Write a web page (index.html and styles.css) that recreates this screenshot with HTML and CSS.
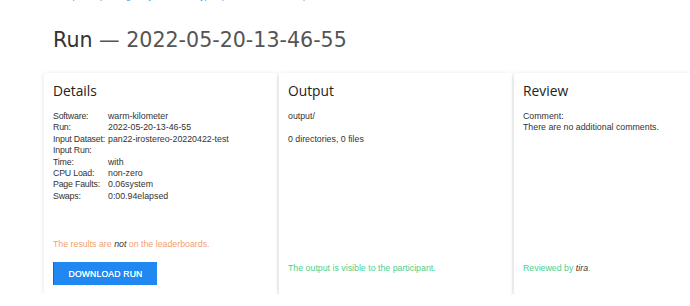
FILE: index.html
```html
<!DOCTYPE html>
<html lang="en">
<head>
    <meta charset="UTF-8">
    <meta name="viewport" content="width=device-width, initial-scale=1.0">
    <title>Run 2022-05-20-13-46-55</title>
    <link rel="stylesheet" href="styles.css">
</head>
<body>
    <nav class="crumbs">
        <a href="#">tira</a> <span class="sep">/</span>
        <a href="#">pan22-profiling-irony-and-stereotype-spreaders-on-twitter</a> <span class="sep">/</span>
        <span>pan22-irostereo-20220422-test</span> <span class="sep">/</span>
        <a href="#">warm-kilometer</a> <span class="sep">/</span>
        <span>2022-05-20-13-46-55</span>
    </nav>

    <main class="page">
        <h1 class="title">Run <span class="title-date">&mdash; 2022-05-20-13-46-55</span></h1>

        <div class="cards">
            <section class="card">
                <h2>Details</h2>
                <dl class="details">
                    <dt>Software:</dt><dd>warm-kilometer</dd>
                    <dt>Run:</dt><dd>2022-05-20-13-46-55</dd>
                    <dt>Input Dataset:</dt><dd>pan22-irostereo-20220422-test</dd>
                    <dt>Input Run:</dt><dd></dd>
                    <dt>Time:</dt><dd>with</dd>
                    <dt>CPU Load:</dt><dd>non-zero</dd>
                    <dt>Page Faults:</dt><dd>0.06system</dd>
                    <dt>Swaps:</dt><dd>0:00.94elapsed</dd>
                </dl>
                <div class="card-foot">
                    <p class="note note-warn">The results are <em>not</em> on the leaderboards.</p>
                    <button class="btn">Download run</button>
                </div>
            </section>

            <section class="card">
                <h2>Output</h2>
                <p class="text">output/</p>
                <p class="text gap">0 directories, 0 files</p>
                <div class="card-foot">
                    <p class="note note-ok">The output is visible to the participant.</p>
                </div>
            </section>

            <section class="card">
                <h2>Review</h2>
                <p class="text">Comment:<br>There are no additional comments.</p>
                <div class="card-foot">
                    <p class="note note-ok">Reviewed by <em>tira</em>.</p>
                </div>
            </section>
        </div>
    </main>
</body>
</html>
```

FILE: styles.css
```css
body {
    margin: 0;
    background-color: #fff;
    color: #333;
    font-family: "Liberation Sans", Arial, sans-serif;
    font-size: 8.8px;
    overflow: hidden;
}

.crumbs {
    margin-top: -9px;
    padding-left: 53px;
    height: 11px;
    line-height: 11px;
    white-space: nowrap;
    color: #888;
}

.crumbs a {
    color: #2d9be6;
    text-decoration: none;
}

.crumbs .sep {
    color: #aaa;
}

.page {
    padding-left: 44px;
}

.title {
    margin: 25px 0 0 9px;
    font-family: "DejaVu Sans", sans-serif;
    font-weight: normal;
    font-size: 20.6px;
    line-height: 26px;
    color: #333;
    white-space: nowrap;
}

.title-date {
    color: #555;
}

.cards {
    display: flex;
    gap: 2px;
    margin-top: 20px;
}

.card {
    flex: none;
    width: 215px;
    height: 204px;
    padding: 8px 9px 9px 9px;
    background-color: #fff;
    border-radius: 2px;
    box-shadow: 0 1px 5px rgba(0, 0, 0, 0.12);
    display: flex;
    flex-direction: column;
}

.card h2 {
    margin: 0 0 10px 0;
    font-family: "Open Sans", sans-serif;
    font-weight: normal;
    font-size: 13.8px;
    line-height: 20px;
    color: #222;
}

.details {
    display: grid;
    grid-template-columns: 55px 1fr;
    grid-auto-rows: 11.4px;
    margin: 0;
    line-height: 11.4px;
    white-space: nowrap;
}

.details dt {
    letter-spacing: -0.2px;
}

.details dd {
    margin: 0;
}

.text {
    margin: 0;
    line-height: 11.4px;
}

.text.gap {
    margin-top: 12px;
}

.card-foot {
    margin-top: auto;
}

.note {
    margin: 0 0 11px 0;
    line-height: 11px;
}

.note em {
    color: #333;
}

.note-warn {
    color: #f3a06f;
    margin-bottom: 12px;
}

.note-ok {
    color: #4bd08e;
}

.btn {
    display: block;
    width: 104px;
    height: 23px;
    border: none;
    border-left: 1px solid #1769c4;
    background-color: #2188f1;
    color: #fff;
    font-family: inherit;
    font-size: 8.6px;
    letter-spacing: 0.2px;
    text-transform: uppercase;
    text-shadow: 0 0 0.4px #fff;
    cursor: pointer;
}
```
